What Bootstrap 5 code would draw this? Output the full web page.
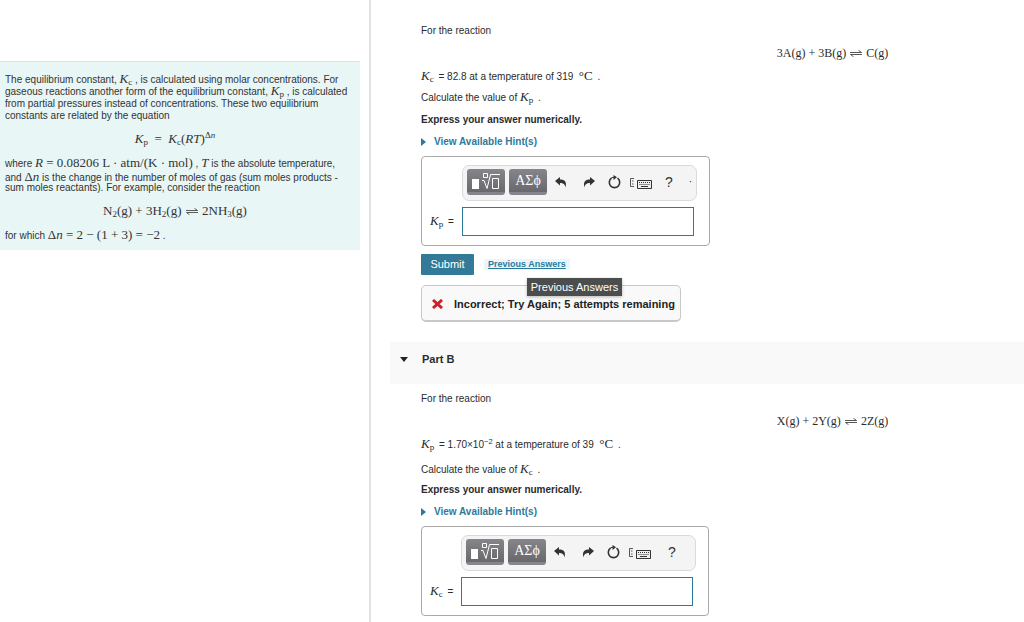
<!DOCTYPE html>
<html lang="en">
<head>
<meta charset="utf-8">
<meta name="viewport" content="width=device-width, initial-scale=1">
<title>Equilibrium constants</title>
<link href="https://cdn.jsdelivr.net/npm/bootstrap@5.3.0/dist/css/bootstrap.min.css" rel="stylesheet">
<style>
  body { font: 10px/20px "Liberation Sans", Arial, sans-serif; color: #2b2b2b; background: #fff; }
  .side { flex: 0 0 371px; min-width: 0; border-right: 2px solid #dfe1e6; padding: 61px 9px 0 0; }
  .intro { background: #e8f6f6; border-top: 1px solid #dde5e5; padding: 10px 15px 10px 5px; line-height: 12px; color: #333; }
  .ln { display: block; height: 12px; white-space: nowrap; }
  .gap-line { margin-top: 2px; }
  .eq { text-align: center; }
  .intro .eq { height: 12px; line-height: 12px; margin: 11px 0; }
  .mth { font-family: "Liberation Serif", "Times New Roman", serif; font-size: 13px; line-height: 1; }
  .mth sub, .mth sup { font-size: 9px; line-height: 0; }
  .mth sub { bottom: -2px; }
  .mth sup { top: -5px; }
  .equil { width: 12px; height: 7px; vertical-align: 0; margin: 0 1px; }
  .task { padding-left: 50px; }
  .task .eq { padding-left: 220px; font-size: 12px; line-height: 20px; }
  .row-line { height: 20px; white-space: nowrap; margin-top: 2px; }
  .row-line .mth, .var .mth { margin-right: 2px; }
  .first { padding-top: 19px; }
  .first .ask { margin-top: 1px; }
  .second .ask { margin-top: 5px; }
  a.hint { color: #2c7a9b; font-weight: 700; text-decoration: none; }
  .answer { width: 289px; border: 1px solid #aaa; border-radius: 4px; padding: 8px 12px 9px 8px; margin-top: 4px; }
  .tools { width: 235px; height: 36px; margin-left: 32px; background: #f4f4f4; border: 1px solid #dadada; border-radius: 7px; padding: 0 4px 2px; }
  .tool { width: 38px; height: 26px; border: 0; border-bottom: 3px solid #85858c; border-radius: 3px; background: linear-gradient(#85858a, #68686d); color: #fff; padding: 0; font: 14px/18px "Liberation Serif", serif; }
  .tool svg { display: block; margin: 0 auto; }
  .ico { border: 0; background: none; padding: 0; line-height: 0; color: #333; }
  .turn { margin-left: 13px; }
  .board { margin: 3px 0 0 9px; }
  .help { font: 14px/20px "Liberation Sans", sans-serif; margin-left: 13px; }
  .entry { margin-top: 6px; }
  .var { width: 32px; white-space: nowrap; }
  .num { width: 232px; height: 29px; border: 1px solid #2c7a9b; border-radius: 0; background: #fff; padding: 2px 6px; font-size: 12px; }
  .second .answer { width: 288px; }
  .second .tools { margin-left: 31px; }
  .second .var { width: 31px; }
  .second .help { margin-left: 17px; }
  .send { width: 53px; height: 21px; border: 0; border-radius: 1px; background: #337a99; color: #fff; font-size: 11px; line-height: 21px; padding: 0; }
  .prev { font-size: 9px; font-weight: 700; line-height: 11px; color: #2c7a9b; background: #eaf6fc; padding: 0 4px; margin-left: 10px; }
  .tip { position: absolute; left: 53px; top: 19px; width: 95px; background: #4b4e4d; color: #fff; font-size: 11px; line-height: 18px; text-align: center; white-space: nowrap; box-shadow: 0 1px 3px #0004; z-index: 2; }
  .feedback { width: 260px; height: 37px; border: 1px solid #c8c8c8; border-bottom-width: 2px; border-radius: 5px; background: #f9f9f9; font-size: 11px; font-weight: 700; margin-top: 10px; padding-top: 2px; color: #222; white-space: nowrap; }
  .part { background: #f9f9f9; margin: 20px 0 5px 19px; height: 42px; padding: 0 0 7px 10px; }
  .part h2 { font-size: 11px; font-weight: 700; margin: 0 0 0 14px; }
</style>
</head>
<body>
<svg class="d-none" xmlns="http://www.w3.org/2000/svg">
  <symbol id="equil" viewBox="0 0 12 7"><path d="M0 2.500H11.500L8.500.3M12 4.500H.5L3.500 6.700" fill="none" stroke="currentColor" stroke-width=".8"/></symbol>
  <symbol id="root" viewBox="0 0 30 18"><path d="M1 7h7v10H1z" fill="#fff"/><path d="M12.500 1.500h4v4h-4zM11 8.500h2l3 8L19.500 2.500H29M21.500 6.500h6v10h-6z" fill="none" stroke="#fff"/></symbol>
  <symbol id="undo" viewBox="0 0 12 11"><path d="M0 4 5 0V2.500C10 2.500 12 5 10.500 10.500 10 7 8 6 5 6V8.500z" fill="currentColor"/></symbol>
  <symbol id="reset" viewBox="0 0 13 14"><path d="M3.500 3.200A5.200 5.200 0 1 0 9.500 3.200" fill="none" stroke="currentColor" stroke-width="1.600"/><path d="M5.500 0 9 2.300 5.500 5z" fill="currentColor"/><path d="M3 3.300Q5 1.800 7 2.300" fill="none" stroke="currentColor"/></symbol>
  <symbol id="keys" viewBox="0 0 22 12"><path d="M4 .5H.5v8H4M2 3h1.500M2 6h1.500" fill="none" stroke="#555"/><path d="M7.500 2.500h14v8h-14z" fill="#eee" stroke="#333"/><path d="M9 4.500h11.500M9.500 6.500H20" stroke="#333" stroke-dasharray="1 1"/><path d="M11 8.500h7" stroke="#333"/></symbol>
  <symbol id="right" viewBox="0 0 5 8"><path d="M0 0 5 4 0 8z" fill="currentColor"/></symbol>
</svg>

<div class="d-flex min-vh-100">
  <aside class="side">
    <div class="intro">
      <span class="ln">The equilibrium constant, <span class="mth"><i>K</i><sub>c</sub></span> , is calculated using molar concentrations. For</span>
      <span class="ln">gaseous reactions another form of the equilibrium constant, <span class="mth"><i>K</i><sub>p</sub></span> , is calculated</span>
      <span class="ln gap-line">from partial pressures instead of concentrations. These two equilibrium</span>
      <span class="ln">constants are related by the equation</span>
      <div class="eq mth"><i>K</i><sub>p</sub>&nbsp; =&nbsp; <i>K</i><sub>c</sub>(<i>RT</i>)<sup>Δ<i>n</i></sup></div>
      <span class="ln">where <span class="mth"><i>R</i> = 0.08206 L · atm/(K · mol)</span> , <i class="mth">T</i> is the absolute temperature,</span>
      <span class="ln gap-line">and <span class="mth">Δ<i>n</i></span> is the change in the number of moles of gas (sum moles products -</span>
      <span class="ln">sum moles reactants). For example, consider the reaction</span>
      <div class="eq mth">N<sub>2</sub>(g) + 3H<sub>2</sub>(g) <svg class="equil"><use href="#equil"/></svg> 2NH<sub>3</sub>(g)</div>
      <span class="ln">for which <span class="mth">Δ<i>n</i> = 2 − (1 + 3) = −2</span> .</span>
    </div>
  </aside>

  <main class="flex-fill overflow-hidden">
    <section class="task first">
      <div class="row-line">For the reaction</div>
      <div class="row-line eq mth">3A(g) + 3B(g) <svg class="equil"><use href="#equil"/></svg> C(g)</div>
      <div class="row-line mt-1"><span class="mth"><i>K</i><sub>c</sub></span> = 82.8 at a temperature of 319 &nbsp;<span class="mth">°C</span> .</div>
      <div class="row-line ask">Calculate the value of <span class="mth"><i>K</i><sub>p</sub></span> .</div>
      <div class="row-line fw-bold">Express your answer numerically.</div>
      <div class="row-line"><a class="hint" href="#"><svg class="me-2" width="5" height="8"><use href="#right"/></svg>View Available Hint(s)</a></div>

      <div class="answer">
        <div class="tools d-flex align-items-center">
          <button class="tool" type="button" aria-label="Templates"><svg width="30" height="18"><use href="#root"/></svg></button>
          <button class="tool ms-1" type="button">ΑΣϕ</button>
          <button class="ico ms-2" type="button" aria-label="Undo"><svg width="12" height="11"><use href="#undo"/></svg></button>
          <button class="ico ms-3" type="button" aria-label="Redo"><svg width="12" height="11"><g transform="matrix(-1 0 0 1 12 0)"><use href="#undo"/></g></svg></button>
          <button class="ico turn" type="button" aria-label="Reset"><svg width="13" height="14"><use href="#reset"/></svg></button>
          <button class="ico board" type="button" aria-label="Keyboard"><svg width="22" height="12"><use href="#keys"/></svg></button>
          <button class="ico help" type="button">?</button>
          <span class="ms-auto">·</span>
        </div>
        <div class="d-flex align-items-center entry">
          <label class="var" for="kp"><span class="mth"><i>K</i><sub>p</sub></span> =</label>
          <input class="num" id="kp" type="text">
        </div>
      </div>

      <div class="d-flex align-items-center mt-2">
        <button class="send" type="submit">Submit</button>
        <div class="position-relative d-flex">
          <a class="prev" href="#">Previous Answers</a>
          <div class="tip" role="tooltip">Previous Answers</div>
        </div>
      </div>
      <div class="feedback d-flex align-items-center">
        <svg class="ms-2 me-2" width="16" height="10" viewBox="0 0 16 10"><path d="M3 1l9 8M12 1l-9 8" stroke="#cb2229" stroke-width="3"/></svg>
        Incorrect; Try Again; 5 attempts remaining
      </div>
    </section>

    <div class="part d-flex align-items-center">
      <svg width="8" height="5"><path d="M0 0h8L4 5z" fill="#222"/></svg>
      <h2>Part B</h2>
    </div>

    <section class="task second">
      <div class="row-line">For the reaction</div>
      <div class="row-line eq mth">X(g) + 2Y(g) <svg class="equil"><use href="#equil"/></svg> 2Z(g)</div>
      <div class="row-line mt-1"><span class="mth"><i>K</i><sub>p</sub></span> = 1.70×10<sup>−2</sup> at a temperature of 39 &nbsp;<span class="mth">°C</span> .</div>
      <div class="row-line ask">Calculate the value of <span class="mth"><i>K</i><sub>c</sub></span> .</div>
      <div class="row-line mt-0 fw-bold">Express your answer numerically.</div>
      <div class="row-line"><a class="hint" href="#"><svg class="me-2" width="5" height="8"><use href="#right"/></svg>View Available Hint(s)</a></div>

      <div class="answer">
        <div class="tools d-flex align-items-center">
          <button class="tool" type="button" aria-label="Templates"><svg width="30" height="18"><use href="#root"/></svg></button>
          <button class="tool ms-1" type="button">ΑΣϕ</button>
          <button class="ico ms-2" type="button" aria-label="Undo"><svg width="12" height="11"><use href="#undo"/></svg></button>
          <button class="ico ms-3" type="button" aria-label="Redo"><svg width="12" height="11"><g transform="matrix(-1 0 0 1 12 0)"><use href="#undo"/></g></svg></button>
          <button class="ico turn" type="button" aria-label="Reset"><svg width="13" height="14"><use href="#reset"/></svg></button>
          <button class="ico board" type="button" aria-label="Keyboard"><svg width="22" height="12"><use href="#keys"/></svg></button>
          <button class="ico help" type="button">?</button>
        </div>
        <div class="d-flex align-items-center entry">
          <label class="var" for="kc"><span class="mth"><i>K</i><sub>c</sub></span> =</label>
          <input class="num" id="kc" type="text">
        </div>
      </div>
    </section>
  </main>
</div>
<script src="https://cdn.jsdelivr.net/npm/bootstrap@5.3.0/dist/js/bootstrap.bundle.min.js"></script>
</body>
</html>
